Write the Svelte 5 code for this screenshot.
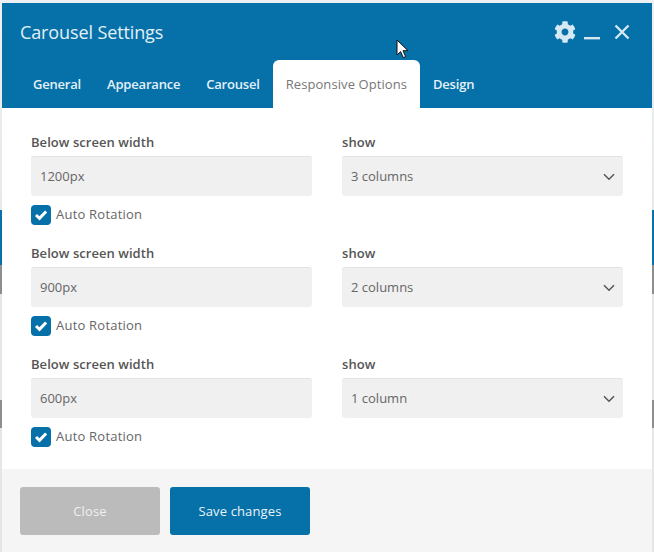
<script lang="ts">
  const tabs = ['General', 'Appearance', 'Carousel', 'Responsive Options', 'Design'];
  const activeTab = 'Responsive Options';

  const rules = [
    { width: '1200px', show: '3 columns' },
    { width: '900px', show: '2 columns' },
    { width: '600px', show: '1 column' }
  ];
</script>

<div class="page">
  <div class="modal">
    <header class="header">
      <div class="title-row">
        <h2 class="title">Carousel Settings</h2>
        <div class="actions">
          <svg class="gear" viewBox="0 0 512 512" width="22" height="22" aria-hidden="true">
            <path fill="currentColor" d="M487.4 315.7l-42.6-24.6c4.3-23.2 4.3-47 0-70.2l42.6-24.6c4.9-2.8 7.1-8.6 5.5-14-11.1-35.6-30-67.8-54.7-94.6-3.8-4.1-10-5.1-14.8-2.3L380.8 110c-17.9-15.4-38.5-27.3-60.8-35.1V25.8c0-5.6-3.9-10.5-9.4-11.7-36.7-8.2-74.3-7.8-109.2 0-5.5 1.2-9.4 6.1-9.4 11.7V75c-22.2 7.9-42.8 19.8-60.8 35.1L88.7 85.5c-4.9-2.8-11-1.9-14.8 2.3-24.7 26.7-43.6 58.9-54.7 94.6-1.7 5.4.6 11.2 5.5 14L67.3 221c-4.3 23.2-4.3 47 0 70.2l-42.6 24.6c-4.9 2.8-7.1 8.6-5.5 14 11.1 35.6 30 67.8 54.7 94.6 3.8 4.1 10 5.1 14.8 2.3l42.6-24.6c17.9 15.4 38.5 27.3 60.8 35.1v49.2c0 5.6 3.9 10.5 9.4 11.7 36.7 8.2 74.3 7.8 109.2 0 5.5-1.2 9.4-6.1 9.4-11.7v-49.2c22.2-7.9 42.8-19.8 60.8-35.1l42.6 24.6c4.9 2.8 11 1.9 14.8-2.3 24.7-26.7 43.6-58.9 54.7-94.6 1.5-5.5-.7-11.3-5.6-14.1zM256 336c-44.1 0-80-35.9-80-80s35.9-80 80-80 80 35.9 80 80-35.9 80-80 80z"/>
          </svg>
          <svg class="minimize" viewBox="0 0 16 18" width="16" height="18" aria-hidden="true">
            <rect x="0" y="14" width="16" height="2.4" fill="currentColor"/>
          </svg>
          <svg class="close" viewBox="0 0 16 16" width="16" height="16" aria-hidden="true">
            <path d="M1.5 1.5l13 13M14.5 1.5l-13 13" stroke="currentColor" stroke-width="2.4" fill="none"/>
          </svg>
        </div>
      </div>
      <nav class="tabs">
        {#each tabs as tab}
          <span class="tab" class:active={tab === activeTab}>{tab}</span>
        {/each}
      </nav>
    </header>

    <main class="content">
      {#each rules as rule}
        <section class="rule">
          <div class="fields">
            <div class="field">
              <span class="label">Below screen width</span>
              <input class="control" type="text" value={rule.width} />
            </div>
            <div class="field">
              <span class="label">show</span>
              <div class="select-wrap">
                <select class="control">
                  <option>{rule.show}</option>
                </select>
                <svg class="chevron" viewBox="0 0 12 8" width="12" height="8" aria-hidden="true">
                  <path d="M1 1.2l5 5 5-5" stroke="#555" stroke-width="1.5" fill="none"/>
                </svg>
              </div>
            </div>
          </div>
          <div class="check-row">
            <span class="check">
              <svg viewBox="0 0 14 12" width="14" height="12" aria-hidden="true">
                <path d="M2 6l3.5 3.3 6.6-6.8" stroke="#fff" stroke-width="3" fill="none"/>
              </svg>
            </span>
            <span class="check-label">Auto Rotation</span>
          </div>
        </section>
      {/each}
    </main>

    <footer class="footer">
      <button class="btn btn-close">Close</button>
      <button class="btn btn-save">Save changes</button>
    </footer>
  </div>

  <svg class="cursor" viewBox="0 0 14 20" width="14" height="20" aria-hidden="true">
    <path d="M1 1v15l3.6-3.4 2.6 6 2.4-1-2.6-5.9H12z" fill="#fff" stroke="#111" stroke-width="1"/>
  </svg>
</div>

<style>
  :global(body) {
    margin: 0;
  }

  .page {
    position: relative;
    width: 654px;
    height: 552px;
    box-sizing: border-box;
    padding: 3px 2px 0;
    overflow: hidden;
    font-family: "Open Sans", "Noto Sans", sans-serif;
    background: linear-gradient(
      to bottom,
      #eef1f3 0,
      #e6e8ea 210px,
      #0a70a5 210px,
      #0a70a5 265px,
      #8e8e8e 265px,
      #8e8e8e 294px,
      #e6e6e6 294px,
      #e6e6e6 400px,
      #8e8e8e 400px,
      #8e8e8e 428px,
      #e6e6e6 428px
    );
  }

  .modal {
    display: flex;
    flex-direction: column;
    height: 549px;
    background: #fff;
  }

  .header {
    height: 105px;
    flex: none;
    display: flex;
    flex-direction: column;
    justify-content: space-between;
    box-sizing: border-box;
    padding: 0 18px;
    background: #0670a8;
  }

  .title-row {
    display: flex;
    justify-content: space-between;
    align-items: center;
    height: 57px;
  }

  .title {
    margin: 0;
    font-size: 18px;
    font-weight: 400;
    letter-spacing: -0.12px;
    color: #e3f0f7;
  }

  .actions {
    display: flex;
    align-items: center;
    gap: 8px;
    padding-right: 4px;
    color: #d6e8f3;
  }

  .minimize {
    margin-right: 6px;
  }

  .tabs {
    display: flex;
    height: 48px;
  }

  .tab {
    display: flex;
    align-items: center;
    padding: 0 13px;
    font-size: 13px;
    font-weight: 600;
    letter-spacing: -0.2px;
    color: #e4f1f8;
  }

  .tab.active {
    background: #fff;
    border-radius: 6px 6px 0 0;
    font-weight: 400;
    letter-spacing: 0.08px;
    color: #777;
  }

  .content {
    flex: 1;
    box-sizing: border-box;
    padding: 25px 29px 0;
    display: flex;
    flex-direction: column;
    gap: 19px;
  }

  .rule {
    display: flex;
    flex-direction: column;
    gap: 9px;
  }

  .fields {
    display: grid;
    grid-template-columns: 281px 281px;
    gap: 30px;
  }

  .field {
    display: flex;
    flex-direction: column;
    gap: 4px;
  }

  .label {
    font-size: 13px;
    font-weight: 600;
    line-height: 19px;
    letter-spacing: 0.05px;
    color: #555;
  }

  .select-wrap {
    position: relative;
  }

  .control {
    display: block;
    width: 100%;
    height: 40px;
    box-sizing: border-box;
    padding: 0 9px 2px;
    border: 0;
    border-top: 1px solid #e3e3e3;
    border-radius: 3px;
    background: #f0f0f0;
    font-family: inherit;
    font-size: 13px;
    color: #666;
    appearance: none;
    outline: none;
  }

  .chevron {
    position: absolute;
    right: 8px;
    top: 17px;
  }

  .check-row {
    display: flex;
    align-items: center;
    gap: 5px;
    height: 20px;
  }

  .check {
    display: flex;
    align-items: center;
    justify-content: center;
    width: 20px;
    height: 20px;
    border-radius: 4px;
    background: #0670a8;
  }

  .check-label {
    padding-bottom: 2px;
    font-size: 13px;
    letter-spacing: 0.22px;
    color: #666;
  }

  .footer {
    flex: none;
    height: 83px;
    box-sizing: border-box;
    padding: 18px;
    display: flex;
    gap: 10px;
    background: #f5f5f5;
  }

  .btn {
    width: 140px;
    height: 48px;
    border: 0;
    border-radius: 3px;
    font-family: inherit;
    font-size: 13px;
    font-weight: 500;
    letter-spacing: 0.12px;
  }

  .btn-close {
    background: #bbb;
    color: #f0f0f0;
  }

  .btn-save {
    background: #0670a8;
    color: #eaf4fa;
  }

  .cursor {
    position: absolute;
    left: 396px;
    top: 39px;
  }
</style>
